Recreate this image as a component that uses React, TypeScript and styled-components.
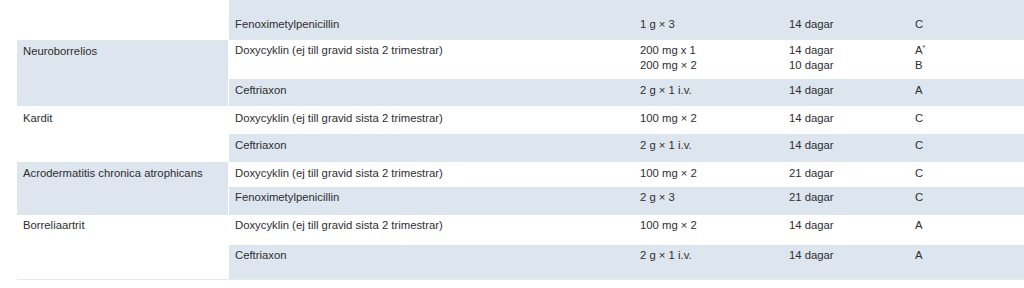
import styled, { createGlobalStyle } from 'styled-components';

const GlobalStyle = createGlobalStyle`
    html, body {
        margin: 0;
        padding: 0;
        background: #ffffff;
    }
    body {
        font-family: 'Liberation Sans', Arial, sans-serif;
        color: #2e2e30;
        font-size: 11.3px;
        line-height: 14.5px;
    }
`;

const Table = styled.div`
    width: 1024px;
    height: 288px;
    overflow: hidden;
    padding-left: 17px;
    box-sizing: border-box;
`;

const Group = styled.div`
    display: grid;
    grid-template-columns: 211px 1fr;
    column-gap: 1px;
`;

const LastLine = styled.div`
    height: 1px;
    background: #e7eaee;
`;

const Condition: any = styled.div`
    background: ${(props: any) => (props.shaded ? '#dde5ee' : '#ffffff')};
    padding: ${(props: any) => props.top ?? 4}px 6px 0 6px;
    white-space: nowrap;
`;

const Treatments = styled.div`
    display: flex;
    flex-direction: column;
`;

const Row: any = styled.div`
    display: grid;
    grid-template-columns: 405px 149px 126px 1fr;
    height: ${(props: any) => props.h}px;
    box-sizing: border-box;
    padding-top: ${(props: any) => props.top ?? 4}px;
    background: ${(props: any) => (props.shaded ? '#dde5ee' : '#ffffff')};
`;

const Cell = styled.div`
    padding-left: 6px;
    white-space: nowrap;
`;

const Star = styled.sup`
    font-size: 7px;
    line-height: 0;
    vertical-align: 4px;
`;

interface Treatment {
    drug: string;
    dose: string[];
    days: string[];
    grade: string[];
    h: number;
    top?: number;
    shaded: boolean;
}

interface Disease {
    name: string;
    shaded: boolean;
    top?: number;
    rows: Treatment[];
}

const doxy = 'Doxycyklin (ej till gravid sista 2 trimestrar)';

const data: Disease[] = [
    {
        name: '',
        shaded: false,
        rows: [{ drug: 'Fenoximetylpenicillin', dose: ['1 g × 3'], days: ['14 dagar'], grade: ['C'], h: 40, top: 17, shaded: true }],
    },
    {
        name: 'Neuroborrelios',
        shaded: true,
        rows: [
            { drug: doxy, dose: ['200 mg x 1', '200 mg × 2'], days: ['14 dagar', '10 dagar'], grade: ['A*', 'B'], h: 39, top: 3, shaded: false },
            { drug: 'Ceftriaxon', dose: ['2 g × 1 i.v.'], days: ['14 dagar'], grade: ['A'], h: 27, top: 4, shaded: true },
        ],
    },
    {
        name: 'Kardit',
        shaded: false,
        top: 5,
        rows: [
            { drug: doxy, dose: ['100 mg × 2'], days: ['14 dagar'], grade: ['C'], h: 28, top: 5, shaded: false },
            { drug: 'Ceftriaxon', dose: ['2 g × 1 i.v.'], days: ['14 dagar'], grade: ['C'], h: 28, top: 4, shaded: true },
        ],
    },
    {
        name: 'Acrodermatitis chronica atrophicans',
        shaded: true,
        rows: [
            { drug: doxy, dose: ['100 mg × 2'], days: ['21 dagar'], grade: ['C'], h: 25, top: 4, shaded: false },
            { drug: 'Fenoximetylpenicillin', dose: ['2 g × 3'], days: ['21 dagar'], grade: ['C'], h: 28, top: 3, shaded: true },
        ],
    },
    {
        name: 'Borreliaartrit',
        shaded: false,
        top: 3,
        rows: [
            { drug: doxy, dose: ['100 mg × 2'], days: ['14 dagar'], grade: ['A'], h: 30, top: 3, shaded: false },
            { drug: 'Ceftriaxon', dose: ['2 g × 1 i.v.'], days: ['14 dagar'], grade: ['A'], h: 34, top: 3, shaded: true },
        ],
    },
];

const Lines = ({ items }: { items: string[] }) => (
    <Cell>
        {items.map((t, i) => (
            <div key={i}>
                {t.endsWith('*') ? (
                    <>
                        {t.slice(0, -1)}
                        <Star>*</Star>
                    </>
                ) : (
                    t
                )}
            </div>
        ))}
    </Cell>
);

export default function App() {
    return (
        <>
            <GlobalStyle />
            <Table>
                {data.map((d, i) => (
                    <Group key={i}>
                        <Condition shaded={d.shaded} top={d.top}>
                            {d.name}
                        </Condition>
                        <Treatments>
                            {d.rows.map((r, j) => (
                                <Row key={j} h={r.h} top={r.top} shaded={r.shaded}>
                                    <Cell>{r.drug}</Cell>
                                    <Lines items={r.dose} />
                                    <Lines items={r.days} />
                                    <Lines items={r.grade} />
                                </Row>
                            ))}
                        </Treatments>
                    </Group>
                ))}
                <LastLine />
            </Table>
        </>
    );
}
